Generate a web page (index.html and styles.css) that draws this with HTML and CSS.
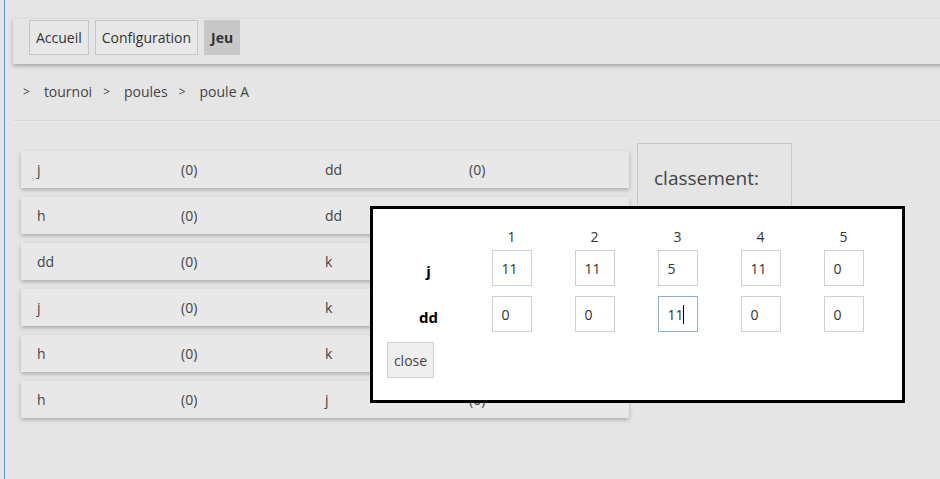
FILE: index.html
```html
<!DOCTYPE html>
<html lang="fr">
<head>
<meta charset="utf-8">
<title>Jeu</title>
<link rel="stylesheet" href="styles.css">
</head>
<body>
<div class="frame">
  <div class="page">
    <nav class="nav">
      <button class="nav-btn">Accueil</button>
      <button class="nav-btn">Configuration</button>
      <button class="nav-btn active">Jeu</button>
    </nav>
    <div class="crumbs">
      <span class="sep">&gt;</span><span class="crumb">tournoi</span>
      <span class="sep">&gt;</span><span class="crumb">poules</span>
      <span class="sep">&gt;</span><span class="crumb">poule A</span>
    </div>
    <div class="divider"></div>
    <div class="content">
      <div class="matches">
        <div class="match"><span>j</span><span>(0)</span><span>dd</span><span>(0)</span></div>
        <div class="match"><span>h</span><span>(0)</span><span>dd</span><span>(0)</span></div>
        <div class="match"><span>dd</span><span>(0)</span><span>k</span><span>(0)</span></div>
        <div class="match"><span>j</span><span>(0)</span><span>k</span><span>(0)</span></div>
        <div class="match"><span>h</span><span>(0)</span><span>k</span><span>(0)</span></div>
        <div class="match"><span>h</span><span>(0)</span><span>j</span><span>(0)</span></div>
      </div>
      <div class="ranking">classement:</div>
    </div>
  </div>
</div>

<div class="modal">
  <table class="scores">
    <tr class="head">
      <th></th><th>1</th><th>2</th><th>3</th><th>4</th><th>5</th>
    </tr>
    <tr>
      <th class="player">j</th>
      <td><input class="score" value="11"></td>
      <td><input class="score" value="11"></td>
      <td><input class="score" value="5"></td>
      <td><input class="score" value="11"></td>
      <td><input class="score" value="0"></td>
    </tr>
    <tr>
      <th class="player">dd</th>
      <td><input class="score" value="0"></td>
      <td><input class="score" value="0"></td>
      <td><span class="caret-wrap"><input class="score focused" value="11"><span class="caret"></span></span></td>
      <td><input class="score" value="0"></td>
      <td><input class="score" value="0"></td>
    </tr>
  </table>
  <button class="close-btn">close</button>
</div>
</body>
</html>
```

FILE: styles.css
```css
html, body {
  margin: 0;
  padding: 0;
  height: 100%;
  overflow: hidden;
}
body {
  background: #e5e5e5;
  font-family: "Open Sans", "Noto Sans", sans-serif;
  font-size: 14px;
  color: #333;
}
.frame {
  margin-left: 4px;
  border-left: 1px solid #5b9bd5;
  height: 100%;
}
.page {
  padding: 19px 0 0 8px;
}
.nav {
  display: flex;
  gap: 6px;
  padding: 1px 0 9px 16px;
  background: #e5e5e5;
  box-shadow: 0 2px 4px rgba(0, 0, 0, 0.28);
  margin-right: -10px;
}
.nav-btn {
  font-family: inherit;
  font-size: 14px;
  color: #333;
  background: #e8e8e8;
  border: 1px solid #c6c6c6;
  height: 35px;
  padding: 0 6px;
  margin: 0;
  border-radius: 0;
}
.nav-btn.active {
  background: #c8c8c8;
  border-color: #c8c8c8;
  font-weight: bold;
}
.crumbs {
  display: flex;
  align-items: center;
  height: 55px;
  padding-left: 10px;
  color: #444;
}
.sep {
  font-size: 12px;
  margin-right: 14px;
}
.crumb {
  margin-right: 11px;
}
.divider {
  border-top: 1px solid #d6d6d6;
  border-bottom: 1px solid #ececec;
  margin-top: 1px;
}
.content {
  display: flex;
  align-items: flex-start;
  gap: 8px;
  padding: 21px 0 0 8px;
}
.matches {
  display: flex;
  flex-direction: column;
  gap: 9px;
  width: 608px;
  margin-top: 8px;
}
.match {
  display: grid;
  grid-template-columns: 144px 144px 144px 144px;
  align-items: center;
  height: 37px;
  padding-left: 16px;
  background: #e8e8e8;
  box-shadow: 0 2px 4px rgba(0, 0, 0, 0.25);
  color: #444;
}
.ranking {
  width: 155px;
  height: 150px;
  box-sizing: border-box;
  border: 1px solid #c8c8c8;
  padding: 21px 0 0 16px;
  font-size: 19px;
  color: #444;
}
.modal {
  position: absolute;
  left: 370px;
  top: 206px;
  width: 515px;
  height: 191px;
  background: #fff;
  border: 3px solid #000;
  padding: 0 0 0 14px;
  box-sizing: content-box;
}
.scores {
  border-collapse: collapse;
  margin-top: 16px;
}
.scores th,
.scores td {
  padding: 0;
  text-align: center;
}
.scores .head th {
  font-weight: normal;
  font-size: 14px;
  color: #333;
  height: 22px;
  padding-bottom: 3px;
  vertical-align: bottom;
  line-height: 20px;
}
.scores th:first-child {
  width: 83px;
}
.scores tr:not(.head) td {
  padding-bottom: 10px;
  vertical-align: top;
}
.scores td {
  width: 83px;
}
.scores .player {
  font-weight: bold;
  font-size: 15px;
  color: #000;
  padding: 6px 0 10px 0;
  line-height: 20px;
}
.score {
  width: 40px;
  height: 36px;
  box-sizing: border-box;
  border: 1px solid #cfcfcf;
  padding: 0 0 0 9px;
  font-family: inherit;
  font-size: 14px;
  color: #333;
  background: #fff;
  outline: none;
  display: block;
  margin: 0 auto;
}
.caret-wrap {
  position: relative;
  display: block;
  width: 40px;
  margin: 0 auto;
}
.score.focused {
  border-color: #8eaedb;
}
.caret {
  position: absolute;
  left: 25px;
  top: 9px;
  width: 1px;
  height: 19px;
  background: #000;
}
.close-btn {
  font-family: inherit;
  font-size: 14px;
  color: #444;
  background: #efefef;
  border: 1px solid #d0d0d0;
  border-radius: 0;
  width: 47px;
  height: 36px;
  padding: 0;
  margin: 0;
  display: block;
}
```
